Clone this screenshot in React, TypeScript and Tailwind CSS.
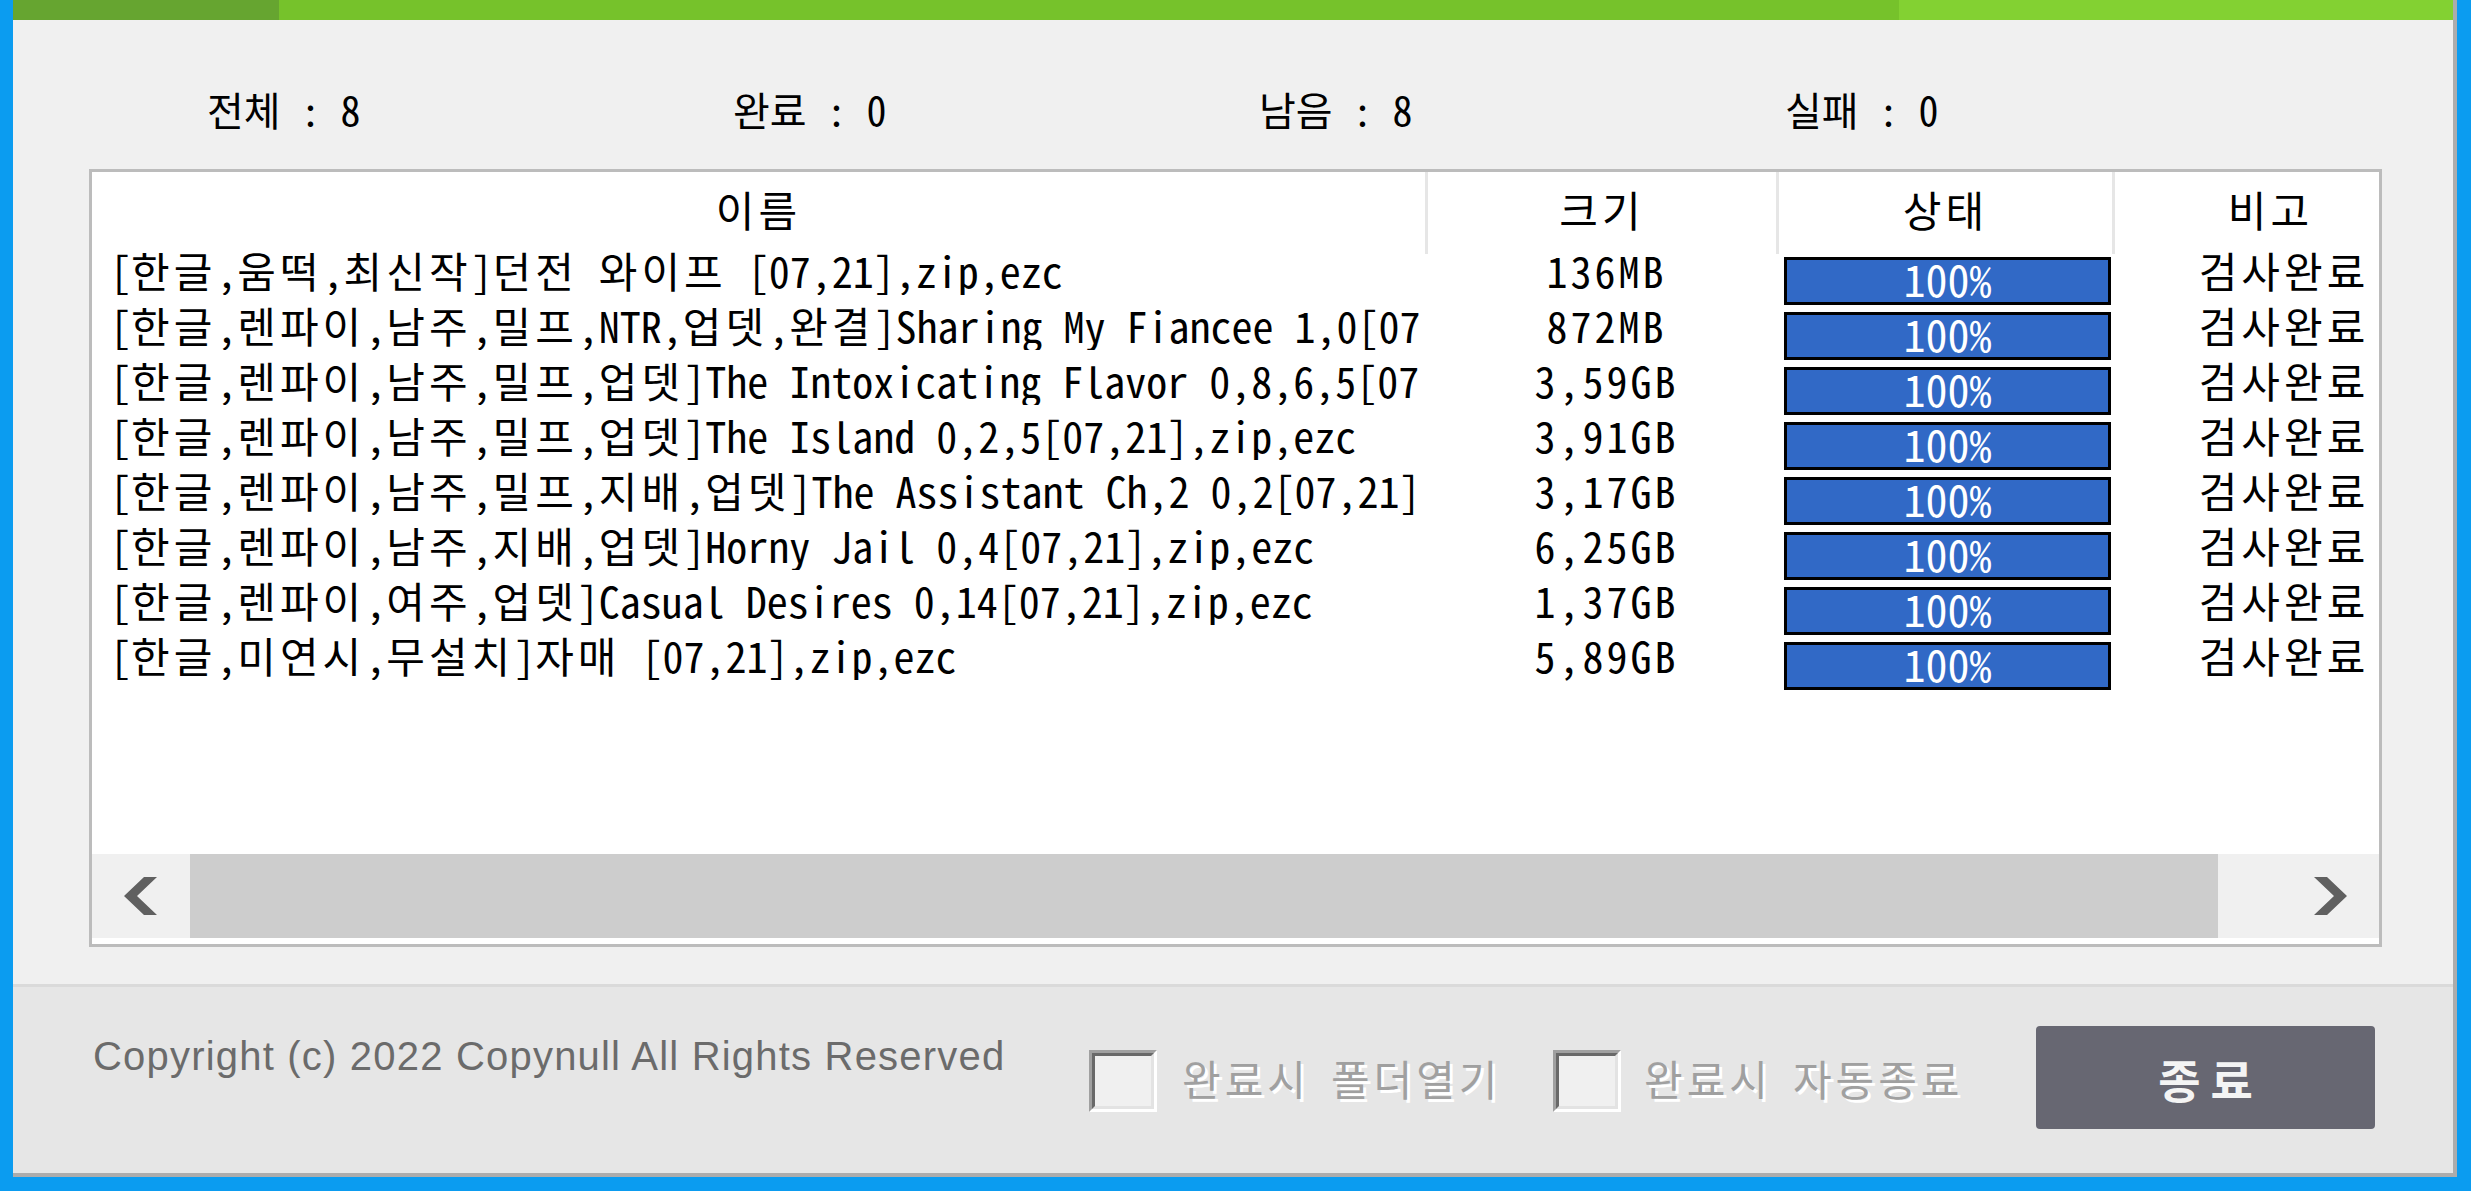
import React from "react";

const KR = "[font-family:'Noto_Sans_Mono_CJK_KR','Noto_Sans_CJK_KR',sans-serif]";

const rows: { name: string; size: string }[] = [
  { name: "[한글,움떡,최신작]던전 와이프 [07,21],zip,ezc", size: "136MB" },
  { name: "[한글,렌파이,남주,밀프,NTR,업뎃,완결]Sharing My Fiancee 1,0[07,21],zip,ezc", size: "872MB" },
  { name: "[한글,렌파이,남주,밀프,업뎃]The Intoxicating Flavor 0,8,6,5[07,21],zip,ezc", size: "3,59GB" },
  { name: "[한글,렌파이,남주,밀프,업뎃]The Island 0,2,5[07,21],zip,ezc", size: "3,91GB" },
  { name: "[한글,렌파이,남주,밀프,지배,업뎃]The Assistant Ch,2 0,2[07,21],zip,ezc", size: "3,17GB" },
  { name: "[한글,렌파이,남주,지배,업뎃]Horny Jail 0,4[07,21],zip,ezc", size: "6,25GB" },
  { name: "[한글,렌파이,여주,업뎃]Casual Desires 0,14[07,21],zip,ezc", size: "1,37GB" },
  { name: "[한글,미연시,무설치]자매 [07,21],zip,ezc", size: "5,89GB" },
];

// Hangul runs get a little extra tracking so that they take the width they have in the picture
function K({ text }: { text: string }) {
  const parts = text.split(/([\uAC00-\uD7A3]+)/);
  return (
    <>
      {parts.map((p, i) =>
        /[\uAC00-\uD7A3]/.test(p) ? (
          <span key={i} className="tracking-[4px]">
            {p}
          </span>
        ) : (
          <span key={i}>{p}</span>
        )
      )}
    </>
  );
}

function Chevron({ dir }: { dir: "left" | "right" }) {
  return (
    <svg width="34" height="40" viewBox="0 0 34 40" className={dir === "right" ? "scale-x-[-1]" : ""}>
      <polygon points="0,20 20,1 33,1 13,20 33,39 20,39" fill="#606060" />
    </svg>
  );
}

function Checkbox() {
  return (
    <div className="w-[68px] h-[62px] border-[3px] border-t-[#a0a0a0] border-l-[#a0a0a0] border-r-white border-b-white">
      <div className="w-full h-full border-[3px] border-t-[#696969] border-l-[#696969] border-r-[#e3e3e3] border-b-[#e3e3e3] bg-[#f0f0f0]" />
    </div>
  );
}

export default function App() {
  return (
    <div className={`w-[2471px] h-[1191px] bg-[#0b9cf0] pl-[13px] pr-[14px] pb-[14px] flex flex-col overflow-hidden ${KR}`}>
      <div className="flex-1 flex flex-col bg-[#f0f0f0] border-r-[4px] border-b-[4px] border-[#acacac]">
        {/* green title strip */}
        <div className="h-[20px] flex">
          <div className="w-[266px] bg-[#66a530]" />
          <div className="w-[1620px] bg-[#76c22b]" />
          <div className="flex-1 bg-[#83d132]" />
        </div>

        {/* main */}
        <div className="h-[964px] flex flex-col pt-[66px]">
          <div className="flex pl-[194px] h-[46px] items-center text-[40px] leading-[46px] text-black">
            <div className="w-[526px] whitespace-pre">전체 : 8</div>
            <div className="w-[526px] whitespace-pre">완료 : 0</div>
            <div className="w-[526px] whitespace-pre">남음 : 8</div>
            <div className="w-[526px] whitespace-pre">실패 : 0</div>
          </div>

          <div className="ml-[76px] mt-[37px] w-[2293px] h-[778px] border-[3px] border-[#bcbcbc] bg-white flex flex-col overflow-hidden">
            {/* header */}
            <div className="h-[82px] flex text-[42px] leading-[42px] text-black shrink-0">
              <div className="w-[1333px] shrink-0 flex items-center justify-center pb-[8px]"><K text="이름" /></div>
              <div className="w-[351px] shrink-0 border-l-[3px] border-[#e6e6e6] flex items-center justify-center pb-[8px]"><K text="크기" /></div>
              <div className="w-[336px] shrink-0 border-l-[3px] border-[#e6e6e6] flex items-center justify-center pb-[8px]"><K text="상태" /></div>
              <div className="w-[340px] shrink-0 border-l-[3px] border-[#e6e6e6] flex items-center justify-center pb-[8px] pr-[26px]"><K text="비고" /></div>
            </div>

            {/* rows */}
            <div className="flex flex-col shrink-0">
              {rows.map((r, i) => (
                <div key={i} className="h-[55px] flex items-start text-[42px] leading-[50px] text-black">
                  <div className="w-[1333px] h-[50px] mt-[-9px] shrink-0 pl-[18px] overflow-hidden whitespace-pre"><K text={r.name} /></div>
                  <div className="w-[351px] mt-[-9px] shrink-0 pl-[12px] text-center whitespace-pre tracking-[3px]">{r.size}</div>
                  <div className="w-[336px] shrink-0 pl-[8px]">
                    <div className="mt-[3px] w-[327px] h-[48px] border-[3px] border-black bg-[#3169c6] flex items-center justify-center text-white text-[44px] leading-[36px] pb-[6px]">
                      100%
                    </div>
                  </div>
                  <div className="w-[340px] mt-[-9px] shrink-0 text-center whitespace-pre pl-[4px]"><K text="검사완료" /></div>
                </div>
              ))}
            </div>

            <div className="flex-1" />

            {/* horizontal scrollbar */}
            <div className="h-[84px] flex bg-[#f0f0f0] shrink-0">
              <div className="w-[98px] flex items-center justify-center">
                <Chevron dir="left" />
              </div>
              <div className="w-[2028px] bg-[#cdcdcd]" />
              <div className="flex-1" />
              <div className="w-[98px] flex items-center justify-center">
                <Chevron dir="right" />
              </div>
            </div>
            <div className="h-[6px] shrink-0 bg-white" />
          </div>
        </div>

        {/* footer */}
        <div className="flex-1 bg-[#e6e6e6] border-t-[3px] border-[#dadada] flex items-start">
          <div className="w-[1076px] pl-[80px] mt-[49px] shrink-0 [font-family:'Liberation_Sans',Arial,sans-serif] text-[40px] leading-[40px] tracking-[1.2px] text-[#6b6b6b] whitespace-pre">
            Copyright (c) 2022 Copynull All Rights Reserved
          </div>
          <div className="mt-[63px] shrink-0">
            <Checkbox />
          </div>
          <div className="w-[396px] pl-[25px] mt-[70px] shrink-0 text-[42px] leading-[42px] text-[#a0a0a0] [text-shadow:3px_3px_0_#ffffff] whitespace-pre">
            <K text="완료시 폴더열기" />
          </div>
          <div className="mt-[63px] shrink-0">
            <Checkbox />
          </div>
          <div className="w-[415px] pl-[23px] mt-[70px] shrink-0 text-[42px] leading-[42px] text-[#a0a0a0] [text-shadow:3px_3px_0_#ffffff] whitespace-pre">
            <K text="완료시 자동종료" />
          </div>
          <div className="mt-[39px] shrink-0 w-[339px] h-[103px] rounded-[4px] bg-[#676772] flex items-center justify-center text-[46px] leading-[48px] font-bold tracking-[10px] text-[#f4f4f4] pl-[10px]">
            종료
          </div>
        </div>
      </div>
    </div>
  );
}
